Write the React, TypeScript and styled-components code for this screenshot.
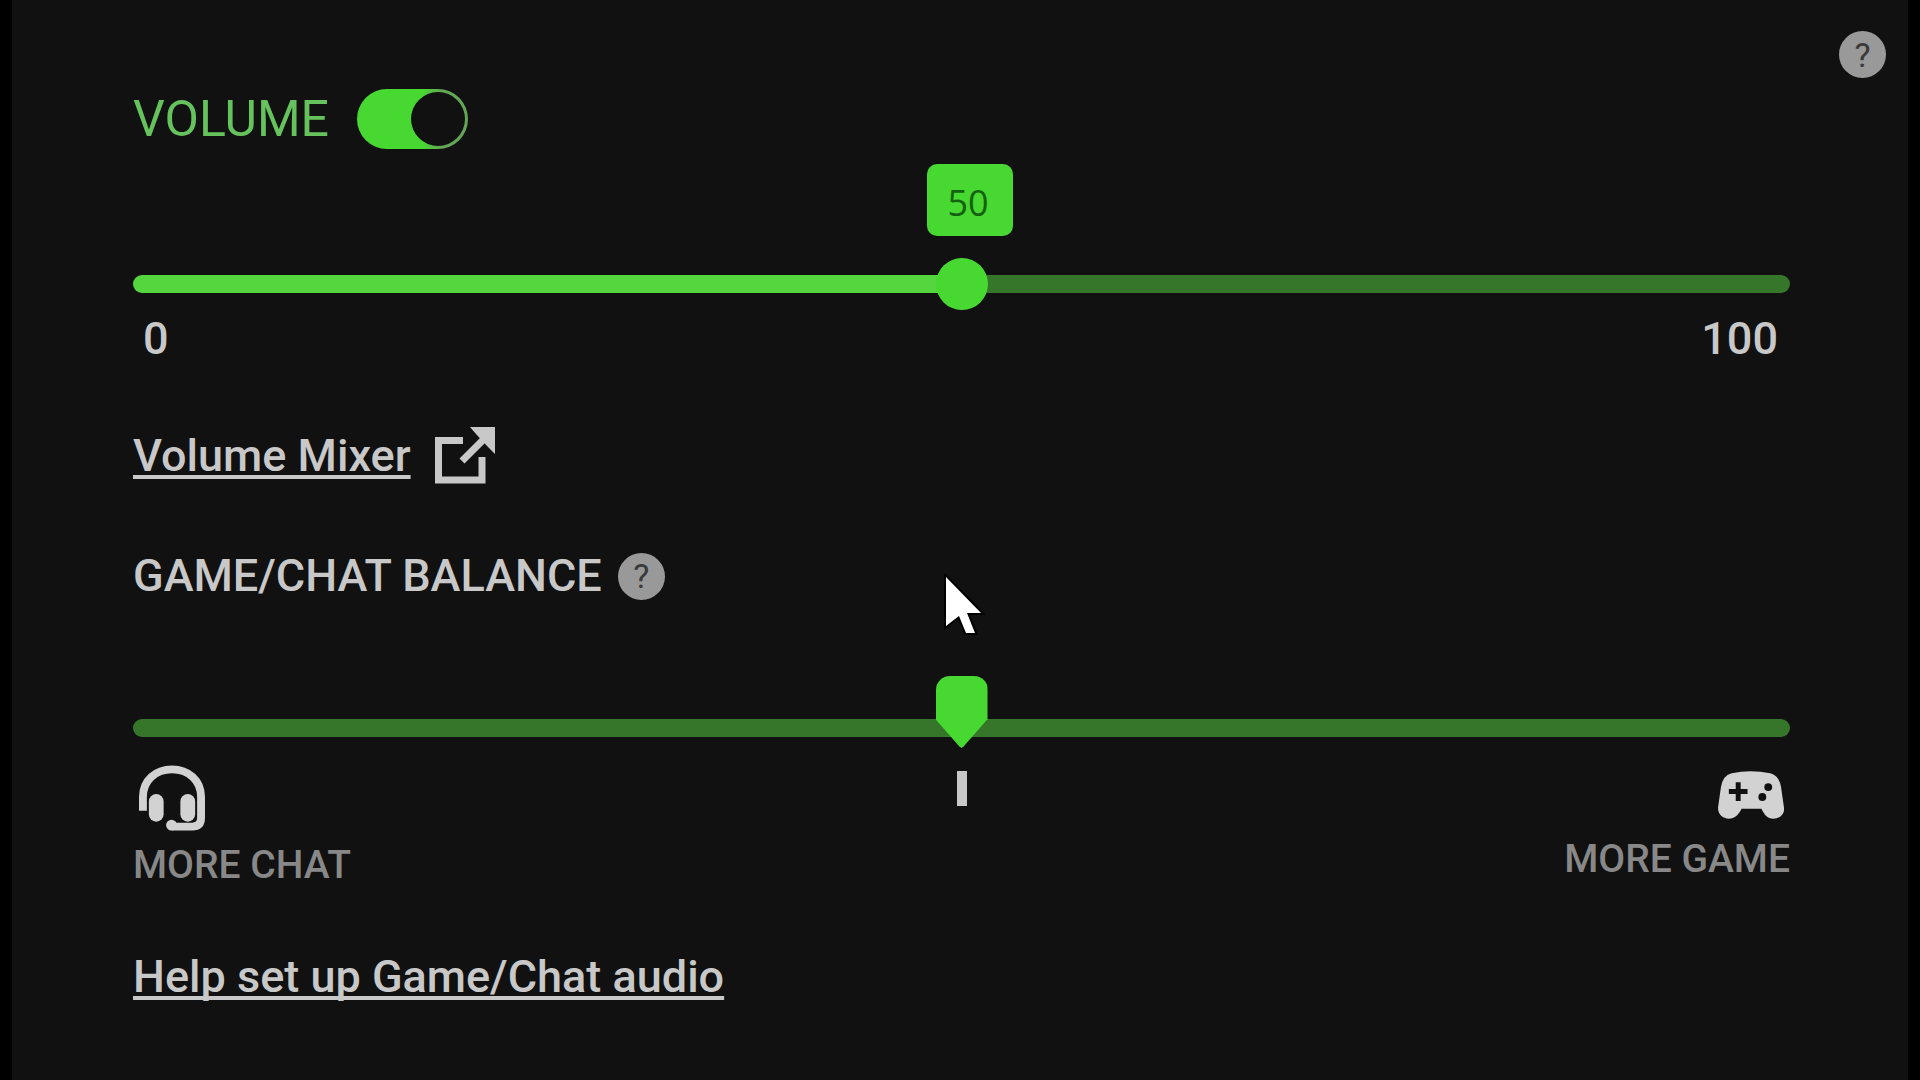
import React, { useState } from 'react';
import styled, { createGlobalStyle, css } from 'styled-components';

const color = {
  page: '#000000',
  panel: '#111111',
  green: '#48d832',
  fill: '#55d53e',
  track: '#36762b',
  heading: '#66c25c',
  text: '#c8c8c8',
  muted: '#888888',
  badge: '#999999',
};

const GlobalStyle = createGlobalStyle`
  *, *::before, *::after { box-sizing: border-box; }
  body {
    margin: 0;
    background: ${color.page};
    color: ${color.text};
    font-family: Roboto, "Liberation Sans", sans-serif;
  }
`;

const Panel = styled.main`
  position: relative;
  min-height: 100vh;
  margin: 0 12px;
  background: ${color.panel};
`;

const TopBar = styled.header`
  display: flex;
  justify-content: flex-end;
  padding: 31px 22px 0;
`;

const Content = styled.div`
  display: flex;
  flex-direction: column;
  padding: 11px 118px 0 121px;
`;

const HelpButton = styled.button`
  display: flex;
  align-items: center;
  justify-content: center;
  width: 47px;
  height: 47px;
  padding: 0;
  border: 0;
  border-radius: 50%;
  background: ${color.badge};
  color: #3a3a3a;
  font: 400 34px/48px Roboto, "Liberation Sans", sans-serif;
  cursor: pointer;
`;

const Row = styled.div<{ $gap: number; $top?: number }>`
  display: flex;
  align-items: center;
  gap: ${(p) => p.$gap}px;
  margin-top: ${(p) => p.$top ?? 0}px;
`;

const VolumeLabel = styled.label`
  color: ${color.heading};
  font-size: 50px;
  line-height: 60px;
`;

const Heading = styled.h2`
  margin: 0;
  font-size: 45px;
  font-weight: 500;
  line-height: 48px;
`;

const Toggle = styled.input`
  appearance: none;
  display: flex;
  justify-content: flex-start;
  width: 111px;
  height: 60px;
  margin: 0;
  padding: 3px;
  border-radius: 30px;
  background: ${color.track};
  cursor: pointer;

  &::before {
    content: '';
    width: 54px;
    height: 54px;
    border-radius: 50%;
    background: ${color.panel};
  }

  &:checked {
    justify-content: flex-end;
    background: linear-gradient(90deg, ${color.green} 60%, #62a854 75%);
  }
`;

const SliderBox = styled.div<{ $top: number }>`
  position: relative;
  display: flex;
  margin-top: ${(p) => p.$top}px;
`;

const roundThumb = css`
  width: 52px;
  height: 52px;
  margin-top: -17px;
  border-radius: 50%;
`;

const pointerThumb = css`
  width: 52px;
  height: 72px;
  margin-top: -43px;
  border-radius: 14px 14px 0 0;
  clip-path: polygon(0 0, 100% 0, 100% 60%, 54% 98%, 50% 100%, 46% 98%, 0 60%);
`;

const Range = styled.input<{ $pointer?: boolean }>`
  appearance: none;
  width: 100%;
  height: 54px;
  margin: 0;
  background: transparent;
  cursor: pointer;

  &::-webkit-slider-runnable-track {
    height: 18px;
    border-radius: 9px;
    background: ${(p) =>
      p.$pointer
        ? color.track
        : `linear-gradient(90deg, ${color.fill} var(--level), ${color.track} var(--level))`};
  }

  &::-webkit-slider-thumb {
    appearance: none;
    background: ${color.green};
    ${(p) => (p.$pointer ? pointerThumb : roundThumb)}
  }
`;

const ValueBubble = styled.output`
  position: absolute;
  bottom: 75px;
  width: 86px;
  height: 72px;
  margin-left: 8px;
  padding: 2px 3px 0 0;
  border-radius: 10px;
  background: ${color.green};
  color: #14610f;
  font: 400 36px/74px "Open Sans", "Noto Sans", sans-serif;
  text-align: center;
  transform: translateX(-50%);
`;

const Scale = styled.div`
  display: flex;
  justify-content: space-between;
  padding: 0 12px 0 10px;
  font-size: 45px;
  font-weight: 500;
  line-height: 56px;
`;

const TextLink = styled.a`
  display: inline-flex;
  align-items: center;
  gap: 24px;
  color: ${color.text};
  font-size: 45px;
  font-weight: 500;
  line-height: 56px;
  text-decoration: underline;
  text-decoration-thickness: 4px;
  text-underline-offset: 4px;
  text-decoration-skip-ink: none;
`;

const Ends = styled.div`
  display: grid;
  grid-template-columns: 1fr 10px 1fr;
  align-items: start;
  margin-top: 10px;
`;

const End = styled.div<{ $right?: boolean }>`
  display: flex;
  flex-direction: column;
  align-items: ${(p) => (p.$right ? 'flex-end' : 'flex-start')};
  gap: 10px;
  color: ${color.muted};
  font-size: 39px;
  font-weight: 500;
  line-height: 48px;

  svg {
    display: block;
    margin: 0 6px;
  }
`;

const CentreTick = styled.div`
  height: 35px;
  margin-top: 6px;
  background: ${color.text};
`;

const Cursor = styled.svg`
  position: absolute;
  top: 574px;
  left: calc(50% - 17px);
  pointer-events: none;
`;

function ExternalIcon() {
  return (
    <svg width="60" height="60" viewBox="0 0 60 60" fill="none" aria-hidden="true">
      <path d="M28 14.5H3.5V54H47V31" stroke={color.text} strokeWidth="7" />
      <path d="M27 35 50 12" stroke={color.text} strokeWidth="7" />
      <path d="M35 1H60V28L53 21 41 8Z" fill={color.text} />
    </svg>
  );
}

function HeadsetIcon() {
  return (
    <svg width="66" height="66" viewBox="0 0 67 66" fill="none" aria-hidden="true">
      <path
        d="M4 46V32C4 15 17 4 33.5 4S63 15 63 32V53Q63 62 54 62H33"
        stroke="#d2d2d2"
        strokeWidth="8"
      />
      <circle cx="33" cy="60.5" r="5.5" fill="#d2d2d2" />
      <rect x="10" y="29" width="15" height="28" rx="7.5" fill="#d2d2d2" />
      <rect x="42" y="29" width="15" height="28" rx="7.5" fill="#d2d2d2" />
    </svg>
  );
}

function GamepadIcon() {
  return (
    <svg width="66" height="60" viewBox="0 0 67 60" aria-hidden="true">
      <path
        d="M14 8Q33 4 53 8Q62 10 64 22L67 43C68 50 62 54 56 54C50 54 48 51 44 44H24C20 51 17 54 11 54C5 54 0 50 0 43L3 22Q5 10 14 8Z"
        fill="#d2d2d2"
      />
      <path d="M18 17h5v7h7v5h-7v7h-5v-7h-7v-5h7z" fill={color.panel} />
      <circle cx="51" cy="22" r="4" fill={color.panel} />
      <circle cx="45" cy="32" r="4" fill={color.panel} />
    </svg>
  );
}

export default function App() {
  const [enabled, setEnabled] = useState(true);
  const [volume, setVolume] = useState(50);
  const [balance, setBalance] = useState(50);

  return (
    <>
      <GlobalStyle />
      <Panel>
        <TopBar>
          <HelpButton type="button" aria-label="Volume help">?</HelpButton>
        </TopBar>
        <Content>
          <Row $gap={28}>
            <VolumeLabel htmlFor="volume-on">VOLUME</VolumeLabel>
            <Toggle
              id="volume-on"
              type="checkbox"
              role="switch"
              checked={enabled}
              onChange={(e) => setEnabled(e.target.checked)}
            />
          </Row>

          <SliderBox $top={108}>
            <ValueBubble htmlFor="volume" style={{ left: `${volume}%` }}>
              {volume}
            </ValueBubble>
            <Range
              id="volume"
              type="range"
              aria-label="Volume"
              min={0}
              max={100}
              value={volume}
              onChange={(e) => setVolume(Number(e.target.value))}
              style={{ '--level': `${volume}%` } as React.CSSProperties}
            />
          </SliderBox>
          <Scale>
            <span>0</span>
            <span>100</span>
          </Scale>

          <Row $gap={0} $top={59}>
            <TextLink href="#mixer">
              <span>Volume Mixer</span>
              <ExternalIcon />
            </TextLink>
          </Row>

          <Row $gap={16} $top={66}>
            <Heading id="balance-title">GAME/CHAT BALANCE</Heading>
            <HelpButton type="button" aria-label="Game/chat balance help">?</HelpButton>
          </Row>

          <SliderBox $top={101}>
            <Range
              $pointer
              type="range"
              aria-labelledby="balance-title"
              min={0}
              max={100}
              value={balance}
              onChange={(e) => setBalance(Number(e.target.value))}
            />
          </SliderBox>
          <Ends>
            <End>
              <HeadsetIcon />
              <span>MORE CHAT</span>
            </End>
            <CentreTick />
            <End $right>
              <GamepadIcon />
              <span>MORE GAME</span>
            </End>
          </Ends>

          <Row $gap={0} $top={60}>
            <TextLink href="#setup">Help set up Game/Chat audio</TextLink>
          </Row>
        </Content>
        <Cursor width="42" height="64" viewBox="0 0 42 64" aria-hidden="true">
          <path
            d="M3 3V52L16 42L23 59H32L24 39H38Z"
            fill="#ffffff"
            stroke="#000000"
            strokeWidth="4"
            paintOrder="stroke"
          />
        </Cursor>
      </Panel>
    </>
  );
}
